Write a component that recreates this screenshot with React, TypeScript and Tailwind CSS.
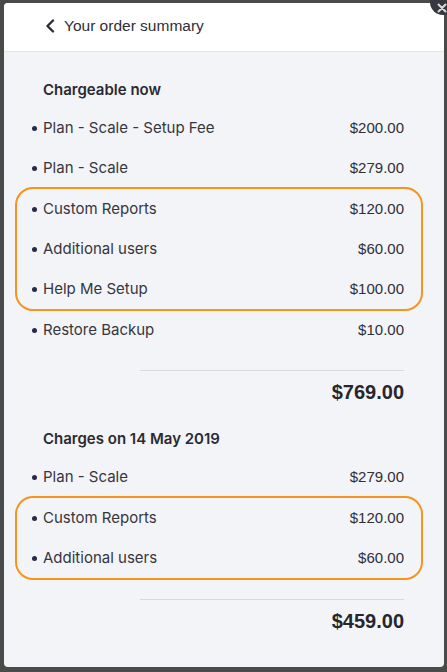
type LineItem = {
  label: string;
  price: string;
};

type Section = {
  title: string;
  before: LineItem[];
  highlighted: LineItem[];
  after: LineItem[];
  total: string;
};

const sections: Section[] = [
  {
    title: "Chargeable now",
    before: [
      { label: "Plan - Scale - Setup Fee", price: "$200.00" },
      { label: "Plan - Scale", price: "$279.00" },
    ],
    highlighted: [
      { label: "Custom Reports", price: "$120.00" },
      { label: "Additional users", price: "$60.00" },
      { label: "Help Me Setup", price: "$100.00" },
    ],
    after: [{ label: "Restore Backup", price: "$10.00" }],
    total: "$769.00",
  },
  {
    title: "Charges on 14 May 2019",
    before: [{ label: "Plan - Scale", price: "$279.00" }],
    highlighted: [
      { label: "Custom Reports", price: "$120.00" },
      { label: "Additional users", price: "$60.00" },
    ],
    after: [],
    total: "$459.00",
  },
];

function Row({ item }: { item: LineItem }) {
  return (
    <div className="flex h-[40px] items-center justify-between">
      <div className="flex items-center">
        <span className="-ml-[11px] mr-[6px] h-[5px] w-[5px] rounded-full bg-[#2b2a45]" />
        <span className="font-['Inter',sans-serif] text-[15px] text-[#36363e]">
          {item.label}
        </span>
      </div>
      <span className="font-['Liberation_Sans',Arial,sans-serif] text-[15px] text-[#2f2f36]">
        {item.price}
      </span>
    </div>
  );
}

function SummarySection({ section }: { section: Section }) {
  return (
    <div>
      <h3 className="font-['Inter',sans-serif] text-[15px] font-semibold leading-[20px] text-[#2a2a30]">
        {section.title}
      </h3>
      <div className="mt-[8px]">
        {section.before.map((item) => (
          <Row key={item.label} item={item} />
        ))}
        <div className="-my-[1px] -ml-[28px] -mr-[19px] rounded-[18px] border-2 border-[#f7941e] pl-[26px] pr-[17px]">
          {section.highlighted.map((item) => (
            <Row key={item.label} item={item} />
          ))}
        </div>
        {section.after.map((item) => (
          <Row key={item.label} item={item} />
        ))}
      </div>
      <div className="ml-auto mt-[20px] h-px w-[264px] bg-[#d9dadf]" />
      <div className="mt-[7px] text-right font-['Liberation_Sans',Arial,sans-serif] text-[20px] font-bold leading-[28px] text-[#26262c]">
        {section.total}
      </div>
    </div>
  );
}

export default function App() {
  return (
    <div className="relative h-[672px] w-[447px] overflow-hidden bg-[#4a4a4a]">
      <div className="absolute left-[4px] top-[3px] flex h-[664px] w-[440px] flex-col overflow-hidden rounded-[4px] bg-[#f3f4f8]">
        <div className="flex h-[49px] shrink-0 items-center border-b border-[#e4e5ea] bg-white pb-[2px] pl-[41px]">
          <svg
            width="10"
            height="14"
            viewBox="0 0 10 14"
            className="mr-[9px]"
            fill="none"
          >
            <path
              d="M8 1.5 L2.5 7 L8 12.5"
              stroke="#2d2d33"
              strokeWidth="2.4"
              strokeLinecap="round"
              strokeLinejoin="round"
            />
          </svg>
          <span className="font-['Liberation_Sans',Arial,sans-serif] text-[15.5px] text-[#2f2f34]">
            Your order summary
          </span>
        </div>
        <div className="flex flex-col gap-[23px] pl-[39px] pr-[40px] pt-[28px]">
          {sections.map((section) => (
            <SummarySection key={section.title} section={section} />
          ))}
        </div>
      </div>
      <div className="absolute -top-[11px] left-[430px] flex h-[26px] w-[26px] items-center justify-center rounded-full bg-[#373741]">
        <svg width="10" height="10" viewBox="0 0 10 10" className="mt-[12px] -ml-[3px]">
          <path
            d="M1.5 1.5 L8.5 8.5 M8.5 1.5 L1.5 8.5"
            stroke="#d9d9de"
            strokeWidth="2"
            strokeLinecap="round"
          />
        </svg>
      </div>
    </div>
  );
}
